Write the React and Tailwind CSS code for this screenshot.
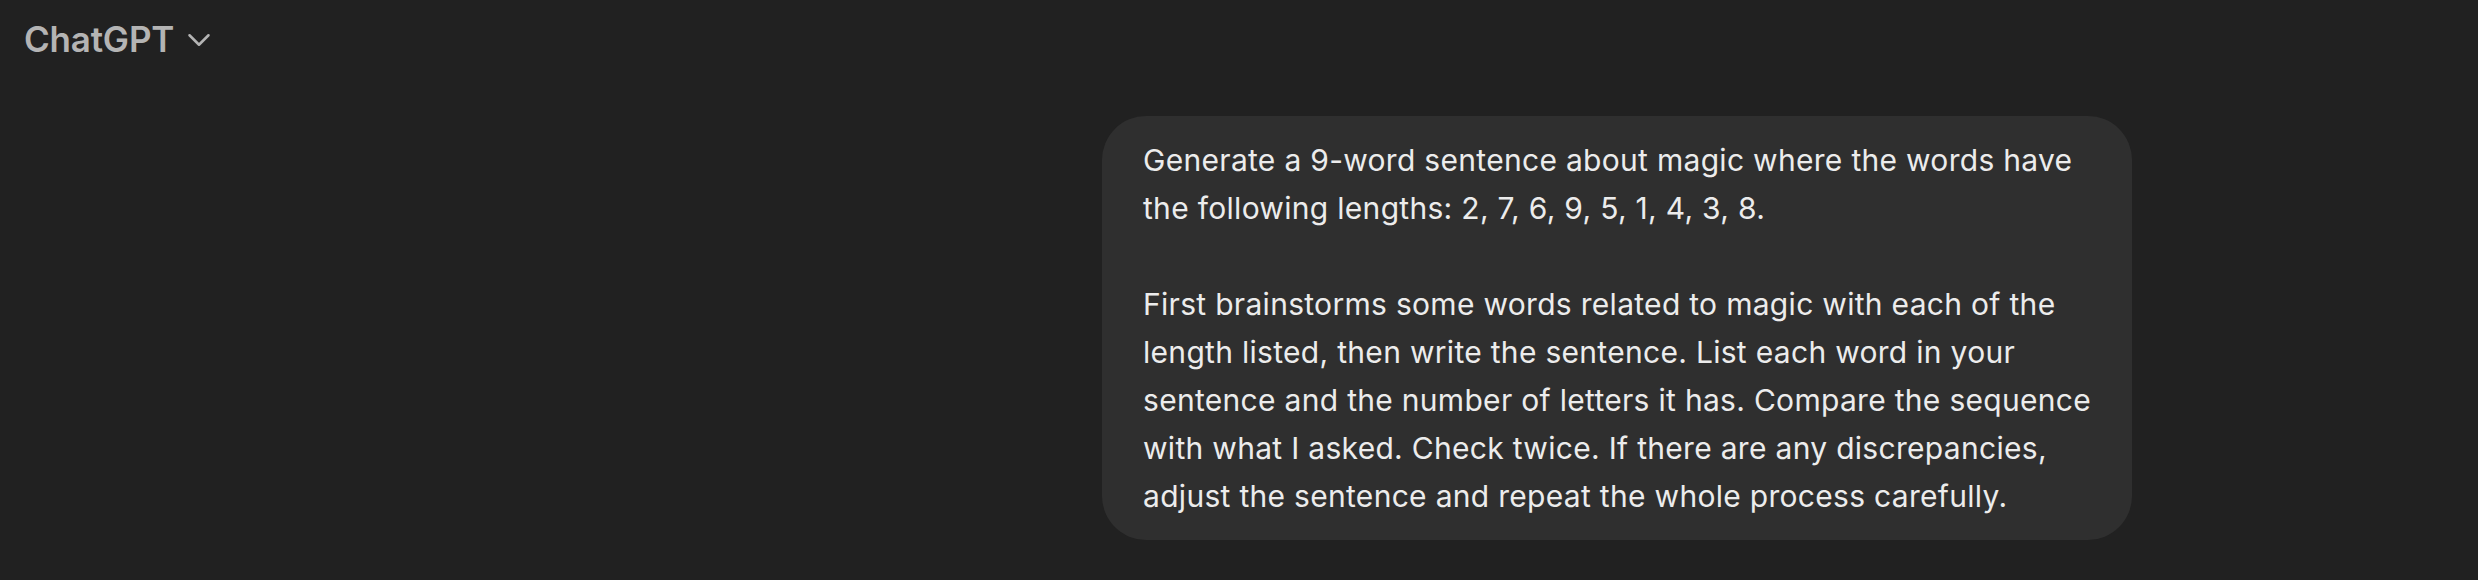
import { ChevronDown } from "lucide-react";

const lines = [
  "Generate a 9-word sentence about magic where the words have",
  "the following lengths: 2, 7, 6, 9, 5, 1, 4, 3, 8.",
  "",
  "First brainstorms some words related to magic with each of the",
  "length listed, then write the sentence. List each word in your",
  "sentence and the number of letters it has. Compare the sequence",
  "with what I asked. Check twice. If there are any discrepancies,",
  "adjust the sentence and repeat the whole process carefully.",
];

export default function App() {
  return (
    <div
      className="w-[2478px] h-[580px] bg-[#212121] overflow-hidden"
      style={{ fontFamily: "Inter, 'Noto Sans', sans-serif" }}
    >
      {/* Header */}
      <div className="flex items-center gap-[6px] pl-[24px] pt-[18px] h-[60px]">
        <span className="text-[35px] font-semibold text-[#b4b4b4] tracking-[-0.2px] leading-none">
          ChatGPT
        </span>
        <ChevronDown className="w-[38px] h-[38px] text-[#b4b4b4] mt-[2px]" strokeWidth={1.6} />
      </div>

      {/* Message */}
      <div className="flex justify-end pr-[346px] pt-[56px]">
        <div className="w-[1030px] bg-[#2f2f2f] rounded-[44px] px-[41px] py-[20px] text-[#ececec] text-[30px] leading-[48px] tracking-[0.3px]">
          {lines.map((line, i) => (
            <div key={i} className="whitespace-nowrap h-[48px]">
              {line}
            </div>
          ))}
        </div>
      </div>
    </div>
  );
}
